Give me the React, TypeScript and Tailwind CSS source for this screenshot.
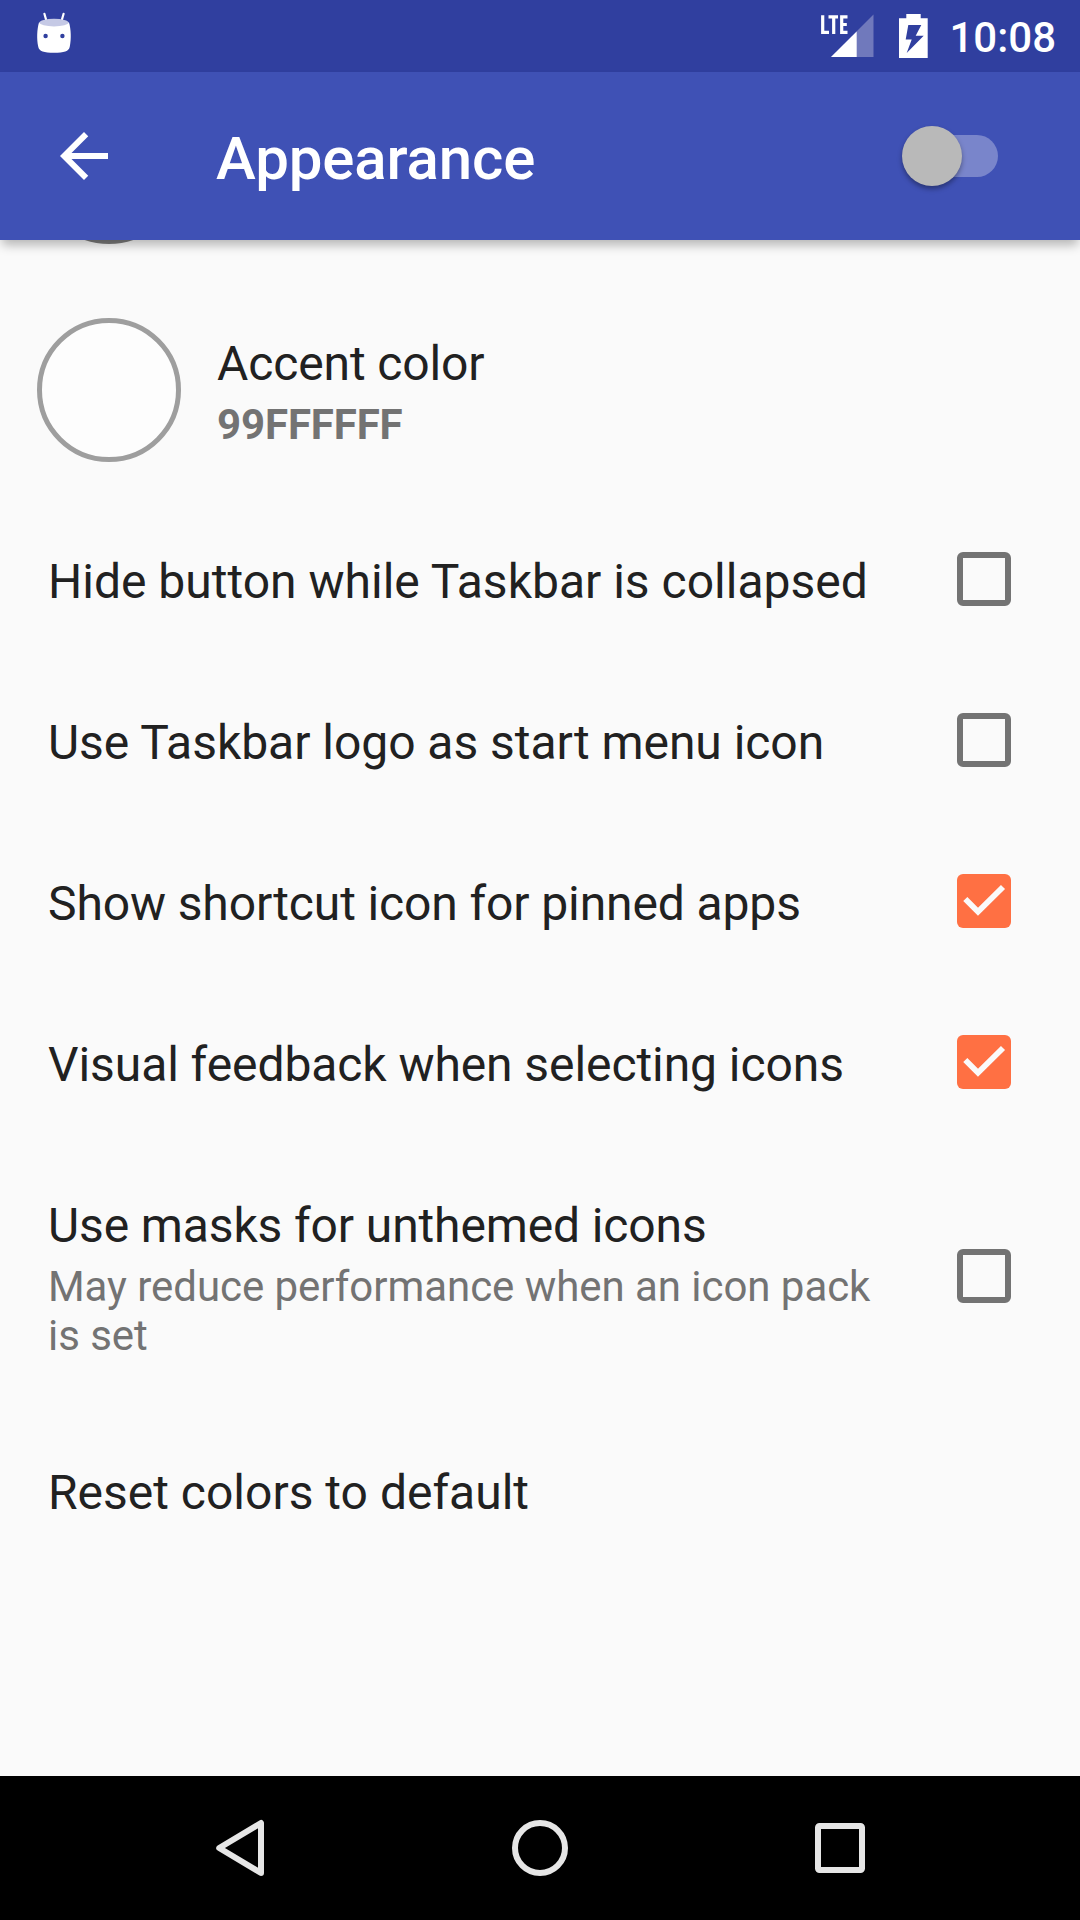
import React from "react";

function StatusBar() {
  return (
    <div className="flex h-[72px] shrink-0 items-start bg-[#303f9f] text-white">
      <svg className="ml-[36px] mt-[12px]" width="36" height="42" viewBox="0 0 36 42">
        <path d="M8.400 1.800L10.600 9.500M27.600 1.800L25.400 9.500" stroke="#fff" strokeWidth="2.200" strokeLinecap="round" />
        <path d="M3 10.500C1 17 .6 27 2.200 34.500C3 39.500 8 40.800 18 40.800S33 39.500 33.800 34.500C35.400 27 35 17 33 10.500z" fill="#fff" />
        <ellipse cx="18" cy="10.600" rx="14.600" ry="3.800" fill="#c5c9e5" />
        <circle cx="9.600" cy="24" r="2.200" fill="#303f9f" />
        <circle cx="26.400" cy="24" r="2.200" fill="#303f9f" />
      </svg>
      <svg className="ml-auto mt-[14px]" width="54" height="44" viewBox="0 0 54 44">
        <path d="M53.500 .5V43H11z" fill="#7079bc" />
        <path d="M36.700 17.500V43H11z" fill="#fff" />
        <path d="M2.700 1.300V18.300H9M8.500 2.800H18M13.700 2V20M27.500 2.800H21.700V18.300H27.500M21.700 10.500H26.800" fill="none" stroke="#fff" strokeWidth="3.200" />
      </svg>
      <svg className="ml-[25px] mt-[14px]" width="29" height="44" viewBox="0 0 29 44">
        <path fillRule="evenodd" fill="#fff" d="M7.300 0H21.700V4.300H28.700V44H0V4.300H7.300zM9.300 11L6.700 25.500H12.700L7.700 39L24.700 21.800H16.700L22.300 11z" />
      </svg>
      <div className="ml-[21px] mr-[24px] mt-[13px] text-[42px] font-medium leading-[49px]">10:08</div>
    </div>
  );
}

function AppBar() {
  return (
    <header className="relative z-10 flex h-[168px] shrink-0 items-center bg-[#3f51b5] text-white shadow-[0_7px_10px_-2px_rgba(0,0,0,0.28)]">
      <svg className="ml-[48px]" width="72" height="72" viewBox="0 0 24 24" fill="#fff">
        <path d="M20 11H7.830l5.590-5.590L12 4l-8 8 8 8 1.410-1.410L7.830 13H20v-2z" />
      </svg>
      <h1 className="ml-[96px] mt-[5px] text-[60px] font-medium leading-[70px] tracking-[-0.12px]">Appearance</h1>
      <div className="relative ml-auto mr-[82px] h-[42px] w-[90px] rounded-full bg-[#7985cb]">
        <div className="absolute -left-[6px] -top-[9px] size-[60px] rounded-full bg-[#b9b9b9] shadow-[0_3px_5px_rgba(0,0,0,0.35)]" />
      </div>
    </header>
  );
}

function Checkbox({ checked }: { checked: boolean }) {
  if (!checked) {
    return <div className="size-[54px] rounded-[6px] border-[6px] border-[#737373]" />;
  }
  return (
    <div className="size-[54px] rounded-[6px] bg-[#ff7043]">
      <svg width="54" height="54" viewBox="0 0 54 54">
        <path d="M8.300 25L21 37.700L46 13" fill="none" stroke="#fafafa" strokeWidth="5.800" />
      </svg>
    </div>
  );
}

function CheckRow({ title, checked, tracking = "" }: { title: string; checked: boolean; tracking?: string }) {
  return (
    <div className="flex h-[161px] items-start justify-between pl-[48px] pr-[69px]">
      <div className={`pt-[55px] text-[48px] leading-[56px] ${tracking}`}>{title}</div>
      <div className="pt-[53px]"><Checkbox checked={checked} /></div>
    </div>
  );
}

export default function App() {
  return (
    <div className="flex h-[1920px] w-[1080px] flex-col overflow-hidden bg-[#fafafa] font-['Roboto',sans-serif] text-[#212121]">
      <StatusBar />
      <AppBar />
      <main className="flex flex-1 flex-col overflow-hidden">
        <div className="-mt-[140px] ml-[37px] size-[144px] shrink-0 rounded-full border-[5px] border-[#7c7c7c]" />
        <div className="flex h-[255px] shrink-0 items-start pl-[37px] pt-[74px]">
          <div className="size-[144px] rounded-full border-[5px] border-[#9e9e9e] bg-[#fdfdfd]" />
          <div className="ml-[36px] flex flex-col gap-[8px] pt-[18px]">
            <div className="text-[48px] leading-[56px] tracking-[-0.12px]">Accent color</div>
            <div className="text-[42px] font-bold leading-[49px] tracking-[-0.12px] text-[#737373]">99FFFFFF</div>
          </div>
        </div>
        <CheckRow title="Hide button while Taskbar is collapsed" checked={false} />
        <CheckRow title="Use Taskbar logo as start menu icon" checked={false} tracking="tracking-[-0.04px]" />
        <CheckRow title="Show shortcut icon for pinned apps" checked tracking="tracking-[-0.12px]" />
        <CheckRow title="Visual feedback when selecting icons" checked tracking="tracking-[-0.08px]" />
        <div className="flex h-[267px] items-start justify-between pl-[48px] pr-[69px]">
          <div className="flex w-[840px] flex-col gap-[8px] pt-[55px]">
            <div className="text-[48px] leading-[56px] tracking-[-0.12px]">Use masks for unthemed icons</div>
            <div className="text-[42px] leading-[49px] tracking-[-0.05px] text-[#737373]">May reduce performance when an icon pack is set</div>
          </div>
          <div className="pt-[106px]"><Checkbox checked={false} /></div>
        </div>
        <div className="pl-[48px] pt-[55px] text-[48px] leading-[56px]">Reset colors to default</div>
      </main>
      <nav className="flex h-[144px] shrink-0 items-center justify-center gap-[240px] bg-black">
        <svg width="60" height="60" viewBox="0 0 60 60" fill="none" stroke="#e6e6e6" strokeWidth="6" strokeLinejoin="round">
          <path d="M51 5V55L9.200 30z" />
        </svg>
        <svg width="60" height="60" viewBox="0 0 60 60" fill="none" stroke="#e6e6e6" strokeWidth="6">
          <circle cx="30" cy="30" r="25" />
        </svg>
        <svg width="60" height="60" viewBox="0 0 60 60" fill="none" stroke="#e6e6e6" strokeWidth="6">
          <rect x="8" y="8" width="44" height="44" rx="1.500" />
        </svg>
      </nav>
    </div>
  );
}
